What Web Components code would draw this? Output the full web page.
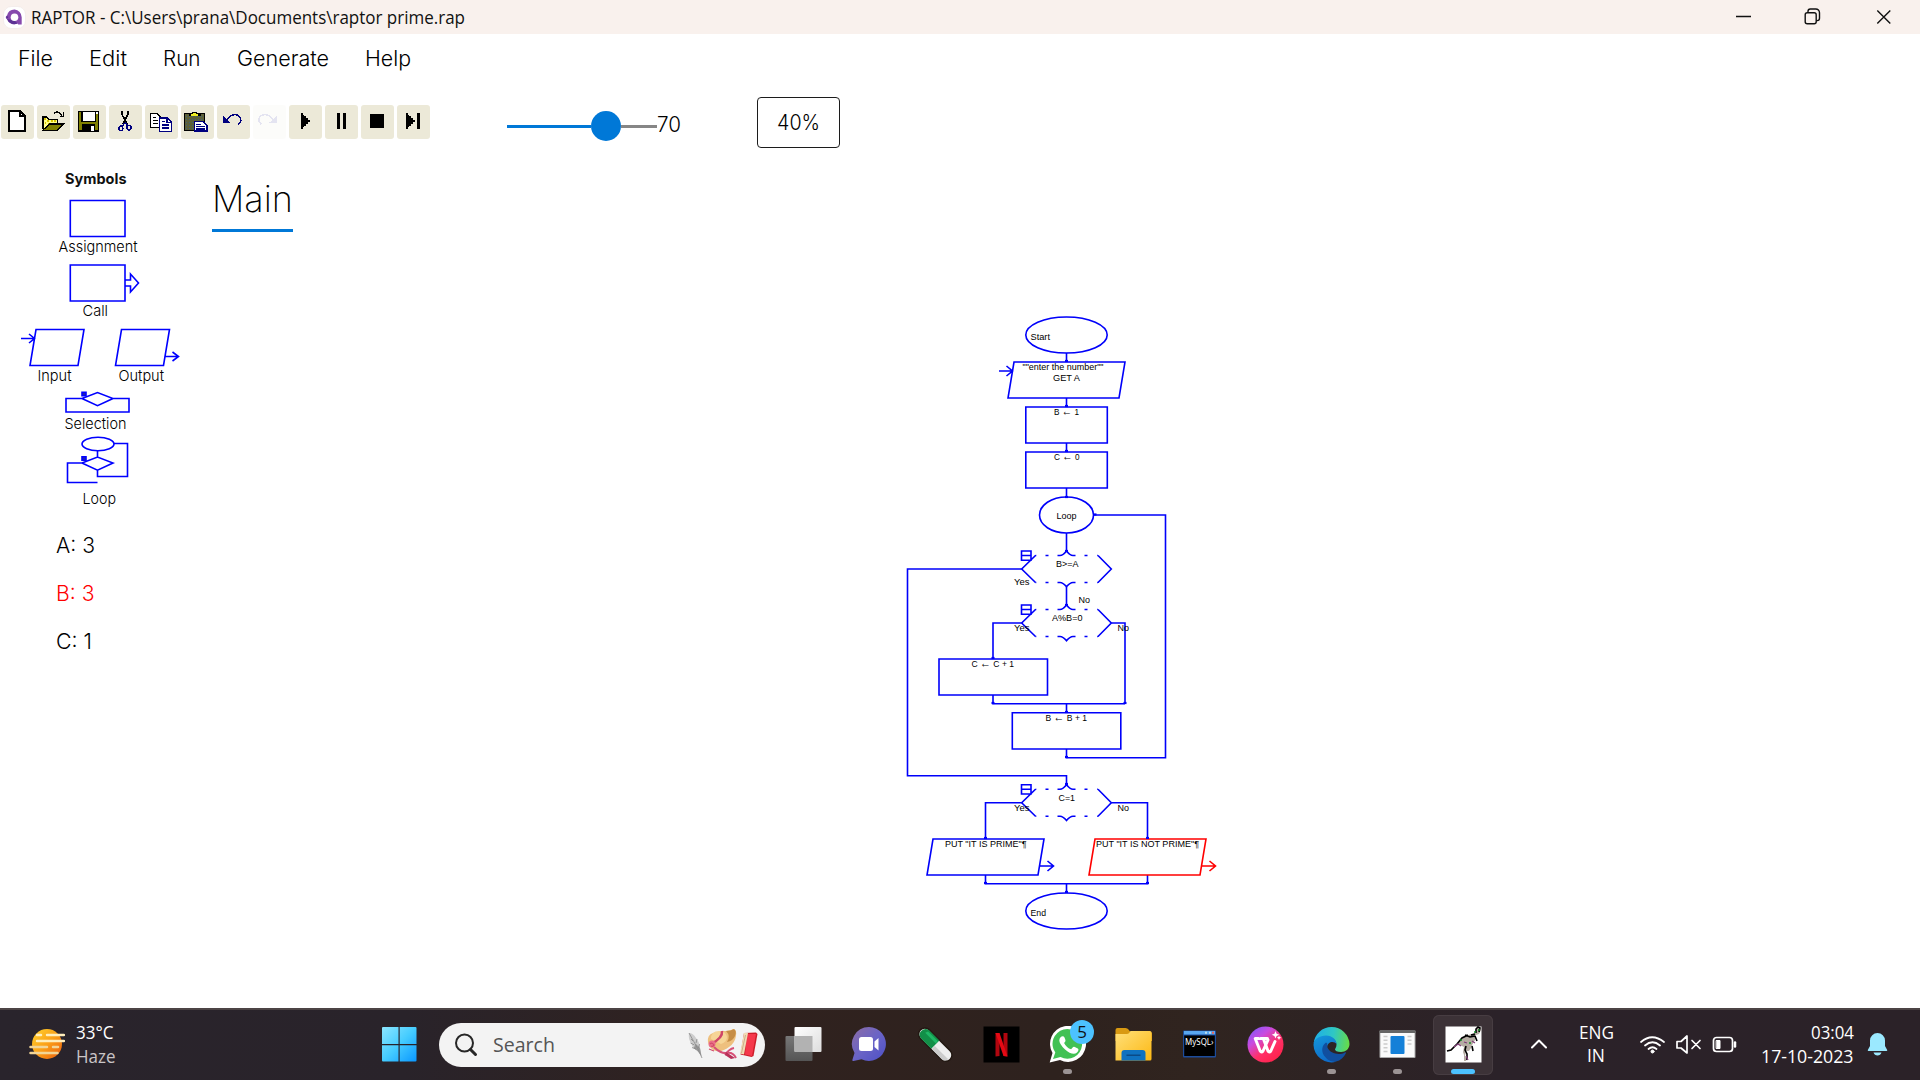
<!DOCTYPE html>
<html lang="en">
<head>
<meta charset="utf-8">
<title>RAPTOR</title>
<style>
html,body{margin:0;height:100%;background:#fff;overflow:hidden}
</style>
</head>
<body>
<raptor-desktop></raptor-desktop>
<script>
const define=(name,html,setup)=>customElements.define(name,class extends HTMLElement{
  connectedCallback(){
    if(this.shadowRoot)return;
    const r=this.attachShadow({mode:'open'});
    r.innerHTML=typeof html==='function'?html(this):html;
    if(setup)setup(this,r);
  }
});

/* One line of text set to an exact advance width. */
define('fit-text',el=>`<style>
:host{display:block;flex:none;width:${el.getAttribute('w')}px;font-size:${el.getAttribute('size')}px;white-space:nowrap}
span{display:inline-block;transform-origin:0 50%}
</style><span><slot></slot></span>`,(el,r)=>{
  const s=r.querySelector('span');
  const m=s.offsetWidth?s.getBoundingClientRect().width:0;
  if(m)s.style.transform=`scaleX(${(+el.getAttribute('w')/m).toFixed(4)})`;
});

/* ---------- title bar ---------- */
define('title-bar',`<style>
:host{display:flex;align-items:center;height:34px;box-sizing:border-box;background:#f9f1ed;color:#111;font-family:"Open Sans","Noto Sans",sans-serif;padding-left:3px}
fit-text{margin-left:5px}
.g{flex:1}
svg{display:block;flex:none}
.controls{display:flex;align-items:center;width:220px;height:34px}
</style>
<svg width="23" height="23" viewBox="0 0 23 23"><rect x=".5" y=".5" width="22" height="22" rx="8" fill="#fff" stroke="#eee6e4" stroke-width=".6"/><path d="M11.5 3.5a7.7 7.7 0 0 1 7.2 7.7V18.500h-3.500l-.7-.9A7.700 7.700 0 0 1 4 13.200 2 2 0 0 1 4 9.500 7.700 7.700 0 0 1 11.500 3.500Z" fill="#8649ad"/><path d="M4 13a7.700 7.700 0 0 0 10.500 4.500L11.500 14.500Z" fill="#5c3294"/><circle cx="11.500" cy="11.200" r="3.800" fill="#fff"/><circle cx="4.200" cy="11.300" r="1" fill="#5c3294"/></svg>
<fit-text w="434" size="17.500">RAPTOR - C:\\Users\\prana\\Documents\\raptor prime.rap</fit-text>
<div class="g"></div>
<div class="controls"><svg width="220" height="34" viewBox="1700 0 220 34" fill="none" stroke="#111" stroke-width="1.400"><path d="M1736 16.500h15M1877.300 10.500l13 13M1890.300 10.500l-13 13"/><rect x="1805.200" y="12.700" width="11" height="11" rx="2"/><path d="M1808 12.500v-1.200a2.300 2.300 0 0 1 2.300-2.300h5.500a3.700 3.700 0 0 1 3.700 3.700v5.600a2.300 2.300 0 0 1-2.300 2.300h-1"/></svg></div>`);

/* ---------- menu ---------- */
define('menu-bar',`<style>
:host{display:flex;align-items:center;height:48px;padding-left:18px;font-family:Inter,sans-serif;font-weight:300;color:#000}
fit-text+fit-text{margin-left:36px}
</style>
<fit-text w="35" size="21.500">File</fit-text>
<fit-text w="38" size="21.500">Edit</fit-text>
<fit-text w="37.500" size="21.500">Run</fit-text>
<fit-text w="92" size="21.500">Generate</fit-text>
<fit-text w="46" size="21.500">Help</fit-text>`);

/* ---------- toolbar ---------- */
const ICON={
new:`<path d="M24 18h34l14 14v45H24Z" fill="#fff" stroke="#000" stroke-width="6"/><path d="M57 18v15h15" fill="none" stroke="#000" stroke-width="4"/>`,
open:`<path d="M17 38h13l5 6h26v15H39L17 73Z" fill="#ff8"/><path d="M18 73V36h12l5 7h26v13" fill="none" stroke="#000" stroke-width="4"/><path d="M21 42h5M31 48h5M42 48h5M52 48h5M23 54h5M33 55h5" stroke="#d8c400" stroke-width="4"/><path d="M17 76l20-19h42L62 76Z" fill="#808000" stroke="#000" stroke-width="4"/><path d="M51 26c3-7 18-7 23 6M80 22v12H68" fill="none" stroke="#000" stroke-width="4"/>`,
save:`<rect x="17" y="20" width="59" height="59" fill="#808000" stroke="#000" stroke-width="5"/><rect x="27" y="19" width="40" height="31" fill="#fff" stroke="#000" stroke-width="4"/><rect x="27" y="58" width="40" height="22" fill="#000"/><rect x="54" y="64" width="9" height="13" fill="#fff"/><rect x="68" y="22" width="6" height="5" fill="#fff"/>`,
cut:`<path d="M38 18v9l6 11 5 10M57 18v9l-6 11-5 11-4 9M48 46l7 11" stroke="#000" stroke-width="5" fill="none"/><path d="M45 54l-3 10M49 52l6 9" stroke="#00007f" stroke-width="5"/><ellipse cx="35.500" cy="70" rx="6" ry="7" fill="none" stroke="#00007f" stroke-width="4.500"/><ellipse cx="60" cy="68" rx="6" ry="7" fill="none" stroke="#00007f" stroke-width="4.500"/>`,
copy:`<path d="M17 26h20l9 9v32H17Z" fill="#fff" stroke="#000" stroke-width="4"/><path d="M23 37h10M23 46h16M23 55h16" stroke="#000" stroke-width="3.500"/><path d="M44 39h23l12 12v28H44Z" fill="#fff" stroke="#00007f" stroke-width="4"/><path d="M66 39v13h12M50 50h9M50 60h22M50 69h22" stroke="#00007f" stroke-width="3.500" fill="none"/>`,
paste:`<rect x="11" y="25" width="59" height="52" rx="3" fill="#5c6038" stroke="#000" stroke-width="4"/><path d="M15 34h52M15 43h52M15 52h34M15 61h25M15 70h25" stroke="#3f5f7f" stroke-width="3" stroke-dasharray="4 5"/><path d="M24 34v-9h10v-5h14v5h11v9Z" fill="#000"/><path d="M30 32h22v-4h-6v-5H36v5h-6Z" fill="#ee2"/><path d="M41 50h26l11 11v17H41Z" fill="#fff" stroke="#00007f" stroke-width="4"/><path d="M46 58h14M46 65h25M46 72h25" stroke="#00007f" stroke-width="3.500"/>`,
undo:`<path d="M30 44l4-6c8-11 27-12 34-3 6 8 4 16-4 23" fill="none" stroke="#00007f" stroke-width="4.500"/><path d="M18 32v21h22Z" fill="#00007f"/>`,
redo:`<path d="M59 44l-4-6c-8-11-27-12-34-3-6 8-4 16 4 23" fill="none" stroke="#00007f" stroke-width="4.500"/><path d="M71 32v21H49Z" fill="#00007f"/>`,
play:`<path d="M36 24h5v5h5v5h5v5h6v5h6v8h-6v5h-6v5h-5v5h-5v5h-5Z" fill="#000"/>`,
pause:`<path d="M36 24h9v48h-9ZM54 24h9v48h-9Z" fill="#000"/>`,
stop:`<path d="M27 27h42v42H27Z" fill="#000"/>`,
step:`<path d="M27 24h5v5h5v5h5v5h6v5h6v8h-6v5h-6v5h-5v5h-5v5h-5ZM60 24h9v48h-9Z" fill="#000"/>`};
define('tool-button',el=>`<style>
:host{display:block;width:33px;height:34px;border-radius:3px;background:#ece9d8;flex:none}
:host([disabled]){opacity:.1}
svg{display:block;shape-rendering:crispEdges}
</style><svg width="33" height="34" viewBox="0 0 99 102">${ICON[el.getAttribute('icon')]}</svg>`);

define('speed-slider',`<style>
:host{display:flex;align-items:center;width:150px;height:30px}
.a{width:84px;height:3px;background:#0078d7}
.t{width:30px;height:30px;border-radius:50%;background:#0078d7;flex:none}
.b{flex:1;height:3px;background:#868686}
</style><div class="a"></div><div class="t"></div><div class="b"></div>`);

define('zoom-button',`<style>
:host{display:flex;align-items:center;justify-content:center;width:83px;height:51px;box-sizing:border-box;border:1.500px solid #1c1c1c;border-radius:4px;color:#000}
</style><slot></slot>`);

define('tool-bar',`<style>
:host{display:flex;align-items:center;height:80px;padding-left:1px;font-family:Inter,sans-serif;font-weight:300;color:#000}
.tools{display:flex;gap:3px}
speed-slider{margin:8px 0 0 77px}
zoom-button{margin-left:76px}
.v{margin-top:3px}
</style>
<div class="tools">${Object.keys(ICON).map(k=>`<tool-button icon="${k}"${k==='redo'?' disabled':''}></tool-button>`).join('')}</div>
<speed-slider></speed-slider><fit-text class="v" w="24" size="21.500">70</fit-text>
<zoom-button><fit-text w="43" size="21.500">40%</fit-text></zoom-button>`);

/* ---------- symbol palette ---------- */
define('symbol-tile',el=>{
  const y=+el.getAttribute('y'),h=+el.getAttribute('h');
  return `<style>:host{display:block;height:${h}px}svg{display:block;font:15px Inter,sans-serif;font-weight:300}</style>
<svg width="200" height="${h}" viewBox="0 ${y} 200 ${h}"><g fill="none" stroke="#00f" stroke-width="1.600">${SYMBOL[el.getAttribute('kind')]}</g>
${el.getAttribute('labels').split(';').map(l=>{const[t,x,w,b]=l.split(',');return `<text x="${x}" y="${b}" textLength="${w}" lengthAdjust="spacingAndGlyphs" fill="#000">${t}</text>`}).join('')}</svg>`});
const SYMBOL={
assignment:`<path d="M70.300 200.500h54.700v36h-54.700Z"/>`,
call:`<path d="M70.300 265h54.700v36h-54.700ZM125 280h5.500v-6l8 9-8 9v-6H125"/>`,
io:`<path d="M36 329.500h48l-6 36H30ZM121.500 329.500h48l-6 36h-48ZM21 338.500h13.500M29 334l5.500 4.500-5.500 4.500M165 356.500h13.500M172.500 352l6 4.500-6 4.500"/>`,
selection:`<path d="M82 398.500l15.500-6 15.500 6-15.500 7.200ZM82 398.500H66V412h63v-13.500h-16"/><path d="M82 392.200h4v3.600h-4Z" fill="#22a"/>`,
loop:`<ellipse cx="98" cy="444" rx="16" ry="6.700"/><path d="M114 443.500h13.500v33h-30v-6.300M97.500 450.700v6.300M82 463l15.500-6 15.500 6-15.500 7.200ZM82 463H67.500v19.500h30"/><path d="M82 456.700h4v3.600h-4Z" fill="#22a"/>`};
define('symbol-palette',`<style>
:host{display:flex;flex-direction:column;width:200px;font-family:Inter,sans-serif}
.h{height:30px;box-sizing:border-box;display:flex;align-items:center;padding:0 0 2px 65px;font-weight:700;color:#111}
.vars{display:flex;flex-direction:column;font-weight:300;padding:5px 0 0 56px}
.vars div{height:48px;display:flex;align-items:center}
</style>
<div class="h"><fit-text w="61.500" size="14.500">Symbols</fit-text></div>
<symbol-tile kind="assignment" y="194" h="66" labels="Assignment,58.500,79,252"></symbol-tile>
<symbol-tile kind="call" y="260" h="64" labels="Call,82.500,25.500,316"></symbol-tile>
<symbol-tile kind="io" y="324" h="64" labels="Input,37.500,34,381;Output,118.500,45.500,381"></symbol-tile>
<symbol-tile kind="selection" y="388" h="46" labels="Selection,64.500,62,429"></symbol-tile>
<symbol-tile kind="loop" y="434" h="82" labels="Loop,82.500,33.500,504"></symbol-tile>
<div class="vars"><div style="color:#000"><fit-text w="39" size="21.500">A: 3</fit-text></div><div style="color:#f00"><fit-text w="38.500" size="21.500">B: 3</fit-text></div><div style="color:#000"><fit-text w="36" size="21.500">C: 1</fit-text></div></div>`);

/* ---------- tab + flowchart ---------- */
define('chart-tab',`<style>
:host{display:block;width:81px;border-bottom:3px solid #0078d7;height:55px;margin-left:12px;font-family:Inter,sans-serif;font-weight:200;color:#000;line-height:50px}
</style><fit-text w="81" size="36"><slot></slot></fit-text>`);

const txt=(t,x,y,w)=>`<text x="${x}" y="${y}" textLength="${w}" lengthAdjust="spacingAndGlyphs">${t.replace('←','<tspan font-size="12">←</tspan>')}</text>`;
const decision=y=>`<path d="M1035.500 ${y-13.500}L1021.700 ${y}L1035.500 ${y+13.500}M1098 ${y-13.500}L1111.300 ${y}L1098 ${y+13.500}
M1045.500 ${y-13.500}h3M1084.500 ${y-13.500}h3M1057.500 ${y-13.500}h2.500q3 0 6.500-4.500q3.500 4.500 6.500 4.500h2.500
M1045.500 ${y+13.500}h3M1084.500 ${y+13.500}h3M1057.500 ${y+13.500}h2.500q3 0 6.500 4.300q3.500-4.300 6.500-4.300h2.500
M1021.500 ${y-18}h9.500v9.300h-9.500ZM1021.500 ${y-13.500}h9.500M1035.500 ${y-13.500}h.8M1035.500 ${y+13.500}h.8M1097.200 ${y-13.500}h.8M1097.200 ${y+13.500}h.8"/>`;
const dot=(x,y)=>`<path d="M${x-1.500} ${y-1}h3" stroke-width="2.200"/>`;
define('flow-chart',`<style>
:host{display:block;width:1720px;height:776px}
svg{display:block;font:9.400px "Liberation Sans",Arial,sans-serif}
text{fill:#000}
</style>
<svg width="1720" height="776" viewBox="200 232 1720 776">
<g fill="none" stroke="#0000fa" stroke-width="1.600">
<ellipse cx="1066.500" cy="335" rx="40.700" ry="18"/>
<path d="M1066.500 353v9M1014 362h111l-6 36h-111ZM999 371h13.500M1006.500 366l6 5-6 5M1066.500 398v9M1025.800 407h81.500v36h-81.500ZM1066.500 443v9M1025.800 452h81.500v36h-81.500ZM1066.500 488v9"/>
<ellipse cx="1066.500" cy="515" rx="27" ry="18"/>
<path d="M1093.500 515H1165.500V757.800H1066.500V749M1066.500 533v18M1021.700 569H907.500V775.700H1066.500V784.500M1066.500 587v18M1021.700 623H993V659M1111.300 623H1125V703.700M939 659h108.500v36H939ZM993 695v8.700H1125M1066.500 703.700v9M1012.300 712.700h108.500v36.300h-108.500Z"/>
${decision(569)}${decision(623)}${decision(802.700)}
<path d="M1021.700 802.700H985.500V839M1111.300 802.700H1147.500V839M933 839h111l-6 36H927ZM1040 866h13M1047.500 861l6 5-6 5M985.500 875v8.800H1147.500V875M1066.500 883.800v9"/>
<ellipse cx="1066.500" cy="911" rx="40.700" ry="18"/>
${dot(1066.500,362)}${dot(1066.500,407)}${dot(1066.500,452)}${dot(1066.500,498)}${dot(1095,515.500)}${dot(1066.500,552)}${dot(1066.500,606)}${dot(993,659)}${dot(993,704)}${dot(1125,704)}${dot(1066.500,713)}${dot(1066.500,758)}${dot(1066.500,785)}${dot(985.500,839)}${dot(985.500,884)}${dot(1147.500,884)}${dot(1066.500,893)}
</g>
<path d="M1095 839h111l-6 36h-111ZM1202 866h13M1209.500 861l6 5-6 5" fill="none" stroke="#f00" stroke-width="1.600"/>
${dot(1147.500,839).replace('<path','<path stroke="#00f"')}
${txt('Start',1030.500,340,19.500)}
${txt('""enter the number""',1022.500,370,81)}
${txt('GET A',1053,381,27)}
${txt('B ← 1',1054,415,25)}
${txt('C ← 0',1054,460,25.500)}
${txt('Loop',1056.500,519,20)}
${txt('B&gt;=A',1056,566.500,22.500)}
${txt('Yes',1014,584.500,15.500)}
${txt('No',1078.500,602.500,11.500)}
${txt('A%B=0',1052,620.500,30.500)}
${txt('Yes',1014,630.500,15.500)}
${txt('No',1117.500,630.500,11.500)}
${txt('C ← C + 1',971.500,667,42.500)}
${txt('B ← B + 1',1045.500,721,41.500)}
${txt('C=1',1058.500,800.500,16.500)}
${txt('Yes',1014,811,15.500)}
${txt('No',1117.500,811,11.500)}
${txt('PUT "IT IS PRIME"¶',945,847,81.500)}
${txt('PUT "IT IS NOT PRIME"¶',1096,847,103)}
${txt('End',1030.500,916,15.500)}
</svg>`);

define('work-area',`<style>
:host{display:flex;height:846px}
symbol-palette{margin-top:2px}
main{display:flex;flex-direction:column;width:1720px}
chart-tab{margin-top:12px;box-sizing:content-box}
</style><symbol-palette></symbol-palette><main><chart-tab>Main</chart-tab><flow-chart></flow-chart></main>`);

/* ---------- taskbar ---------- */
const APP={
start:`<defs><linearGradient id="a" x1="0" y1="0" x2="1" y2="1"><stop offset="0" stop-color="#8ce6ff"/><stop offset=".5" stop-color="#45ccff"/><stop offset="1" stop-color="#0a97ff"/></linearGradient></defs><path d="M2 1h15.500v17H1V2Q1 1 2 1M18.700 1H34.500q1 0 1 1v16H18.700ZM1 19.200h16.500V35.500H2q-1 0-1-1ZM18.700 19.200H35.500V34.500q0 1-1 1H18.700Z" fill="url(#a)"/>`,
views:`<defs><linearGradient id="a" x1="0" y1="0" x2="1" y2="1"><stop stop-color="#fff"/><stop offset="1" stop-color="#ddd"/></linearGradient><linearGradient id="b" x1="0" y1="0" x2="0" y2="1"><stop stop-color="#777"/><stop offset="1" stop-color="#555"/></linearGradient></defs><rect x=".5" y="10" width="27" height="25" rx="1" fill="url(#b)"/><rect x="9.500" y="1" width="27" height="25" rx="1" fill="url(#a)"/><path d="M9.500 10h18v16h-17q-1 0-1-1Z" fill="#b2b2b2"/>`,
chat:`<defs><linearGradient id="a" x1="0" y1="0" x2="1" y2="1"><stop stop-color="#8c6ca4"/><stop offset=".5" stop-color="#6a64c6"/><stop offset="1" stop-color="#4d50c6"/></linearGradient></defs><path d="M18 1a17 17 0 1 1-7.500 32.300L2.500 35q-1.500 0-1-1.500L3.500 27A17 17 0 0 1 18 1Z" fill="url(#a)"/><rect x="8" y="11" width="14" height="14" rx="2.500" fill="#fff"/><path d="M23.500 15.500l4-3.500v12.500l-4-3.500Z" fill="#fff"/>`,
pill:`<g transform="rotate(45 18.500 18.500)"><rect x="-2.500" y="12.500" width="42" height="12.500" rx="6.300" fill="#eee" stroke="#221812" stroke-width="1.500"/><path d="M18.500 13H4a5.800 5.800 0 0 0 0 11.500h14.500Z" fill="#128f48"/><path d="M4 14.500h14v3H3Z" fill="#1fb765"/><path d="M19 20h19q-1 4.500-5 4.500H19Z" fill="#ccc"/></g>`,
netflix:`<rect x=".5" y=".5" width="36" height="36" fill="#000"/><path d="M12.500 7h4v23l-4 .5ZM20.500 7h4v23.500l-4-.5Z" fill="#b1060f"/><path d="M12.500 7h4l8 23.500-4-.5Z" fill="#e50914"/>`,
whatsapp:`<path d="M.7 36.500L3.500 27A18 18 0 1 1 11 34Z" fill="#fff"/><path d="M4 33l2.300-6.500A14.800 14.800 0 1 1 11.500 31Z" fill="#41c154"/><path d="M12.500 10.500q2-1 3 1l1 2.700q.3 1-1.400 2.700 2.500 5 7 6.300l2-2.200q.8-.6 1.700-.1l3 1.500q1 .6.500 2-1 3-4.500 3.300-4 0-9-4.500-5.500-5.200-5.500-9 .1-2.400 2.200-3.700Z" fill="#fff"/>`,
files:`<path d="M.5 4q0-2 2-2h8q2 0 3 1.500l2 2.500h20q1.500 0 1.500 1.500V15H.5Z" fill="#d99a12"/><defs><linearGradient id="a" x1="0" y1="0" x2="1" y2="1"><stop stop-color="#ffe07a"/><stop offset="1" stop-color="#fdb813"/></linearGradient></defs><path d="M.5 8h11q2 0 3-1.500L15.500 5H35q1.500 0 1.500 1.500V33q0 1.500-1.500 1.500H.500Z" fill="url(#a)"/><path d="M6.500 34.500V27q0-3 3-3h18q3 0 3 3v7.500Z" fill="#0f72c0"/><path d="M11.500 28.500h14v1.500h-14Z" fill="#0b4a86"/>`,
mysql:`<rect x="2" y="4.500" width="33" height="27" rx="1" fill="#1c4c9c"/><rect x="3" y="5" width="31" height="3.500" fill="#58a6f0"/><path d="M24 5.700h2v2h-2ZM28 5.700h2v2h-2Z" fill="#bde"/><path d="M31 5.700h2v2h-2Z" fill="#e65"/><rect x="3.200" y="9.500" width="30.600" height="20.500" fill="#000"/><text x="4" y="19" font-family="Noto Sans" font-size="8" fill="#fff" textLength="28.500" lengthAdjust="spacingAndGlyphs">MySQL›</text>`,
wps:`<defs><linearGradient id="a" x1="0" y1="0" x2=".8" y2="1"><stop stop-color="#6d5cff"/><stop offset=".35" stop-color="#c94be0"/><stop offset=".65" stop-color="#ff3068"/><stop offset="1" stop-color="#ff2148"/></linearGradient></defs><circle cx="18.500" cy="18.500" r="18" fill="url(#a)"/><path d="M11.500 12.500H8.200l5 12.500q1.200 2 2.800 0L21 14M16.500 13l4.500 12q1.200 2 2.800 0L28 15.500M20.500 12.500h-7" fill="none" stroke="#fff" stroke-width="3" stroke-linejoin="round" stroke-linecap="round"/><path d="M28.500 5l1.100 2.700 2.700 1.100-2.700 1.100-1.100 2.700-1.100-2.700-2.700-1.100 2.700-1.100ZM32 9.500l.7 1.500 1.500.7-1.500.7-.7 1.500-.7-1.500-1.500-.7 1.500-.7Z" fill="#fff"/>`,
edge:`<defs><linearGradient id="a" x1="0" y1=".3" x2="1" y2=".4"><stop stop-color="#1eaee8"/><stop offset=".55" stop-color="#2fc7c4"/><stop offset="1" stop-color="#65dc4b"/></linearGradient><linearGradient id="b" x1="0" y1="0" x2=".4" y2="1"><stop stop-color="#1498dc"/><stop offset="1" stop-color="#0f6cc8"/></linearGradient></defs><path d="M.6 17.500A18 18 0 0 1 36.500 18c0 5-4 8-8.500 8-4 0-6-1.400-6-2.500s1.500-2 1.500-5c0-4-4-7.500-9.500-7.500C7 11 1.500 14 .6 17.500Z" fill="url(#a)"/><path d="M.5 19C.5 13 7 9.500 13 9.500c6.500 0 10.500 4.500 10.500 8.500-2-3.500-9.500-3-9.500 4 0 6.500 5 13.500 9 13.800A18 18 0 0 1 .5 19Z" fill="url(#b)"/><path d="M13 16.500c-4 3-5 8-2 13 3 4.500 8 7 12 6 4.500-1 8-4 10-8.500 0-.8-.5-1-1.200-.600C27 29.500 17 28 14.500 21.500c-.4-1.500-.5-3-.2-4Z" fill="#114f9f"/>`,
window:`<rect x=".5" y="4.500" width="36" height="27.500" rx="1" fill="#aaa"/><rect x="1.500" y="7" width="34" height="24" fill="#fafafa"/><path d="M.500 4.500h36v2.500h-36Z" fill="#666"/><rect x="11.500" y="10" width="14" height="18" rx="1" fill="#1480d8"/><path d="M4.500 10.500h4M4.500 14.300h4M4.500 18h4M4.500 21.700h4M4.500 25.500h4M28.500 10.500h4M28.500 14.300h4M28.500 18h4" stroke="#ccc" stroke-width="1.600"/>`,
raptor:`<rect x=".5" y=".5" width="36" height="36" fill="#fff"/><path d="M2 25l4-1 5-5 6-6 3-3 7-2 3-1 1-4 4-2 1 3-2 4-3 1-1 5-3 5-1 3-2 3-3 0-1 5 2 3-1 2h-2l0-6-1-3 1-5-4-2-4 0-4 5-3 1Z" fill="#b5ada3"/><path d="M2 25l4-1 6-6 5-6 6-3M26 9l4-1M31 7v-4l2-2 2 1-1 4M20 9l5 2 5-1M30 10l2 5M21 20l-1 4 2 4 0 6M27 20l1 5" fill="none" stroke="#000" stroke-width="1.600"/><path d="M9 21l4-3 3 2M19 16l3 1M27 15l3 2M21 30l2 4" stroke="#824178" stroke-width="1.300" fill="none"/><path d="M15 14h2M29 6h2M24 17h2M33 4h2" stroke="#168b28" stroke-width="1.500"/>`};
define('task-app',el=>`<style>
:host{display:flex;flex-direction:column;align-items:center;width:60px;height:60px;box-sizing:border-box;border-radius:6px;flex:none;padding-top:11.500px;margin:0 3px;position:relative}
:host([active]){background:#3c3237;box-shadow:inset 0 0 0 1px #473d42}
svg{display:block;flex:none}
i{display:block;width:9px;height:5px;border-radius:3px;background:#9b9394;margin-top:5.500px}
:host([active]) i{width:24px;background:#4cc2ff}
b{position:absolute;left:33px;top:5px;width:24px;height:24px;border-radius:50%;background:#4cc2ff;color:#111;font:400 17px/24px "Open Sans",sans-serif;text-align:center}
</style><svg width="37" height="37" viewBox="0 0 37 37">${APP[el.getAttribute('app')]}</svg>${el.hasAttribute('running')?'<i></i>':''}${el.hasAttribute('badge')?`<b>${el.getAttribute('badge')}</b>`:''}`);

define('search-box',`<style>
:host{display:flex;align-items:center;width:326px;height:44px;border-radius:22px;background:#f3f3f3;flex:none;box-sizing:border-box;padding:0 7px 0 15px;color:#555}
svg{display:block;flex:none}.g{flex:1}fit-text{margin-left:15px}
</style>
<svg width="24" height="24" viewBox="0 0 24 24" fill="none" stroke="#272727"><circle cx="10.500" cy="10" r="8.500" stroke-width="2"/><path d="M16.500 16.500l5 5" stroke-width="3" stroke-linecap="round"/></svg>
<fit-text w="62" size="20">Search</fit-text><div class="g"></div>
<svg width="72" height="36" viewBox="0 0 72 36">
<path d="M3 6q4 0 7 5 4 5 4 10l1.500 8-4-5q-5-3-6-7Q2 12 3 6Z" fill="#cdcdcd"/><path d="M10 17l4 4 1.500 8-4-5-4-3Z" fill="#999"/><path d="M3 6q5 9 9 16l4 9M7 14l-2-2M8.500 18l-4-2M10 22l-4-1.500M10 16l1-4M12.500 21l1-4" fill="none" stroke="#888" stroke-width=".8"/>
<path d="M22 15q-1-7 5-9l9-2q8 0 11-2 4 0 3 7-1 7-7 11-6 5-13 4-6-1-8-9Z" fill="#eec07e"/><path d="M40 4q5 0 8-2 3 2 1 7-2 5-8 6 4-6-1-11Z" fill="#c68d45"/><path d="M25 12q0-8 8-8 7 0 8 6 0 5-6 7Z" fill="#f6d597"/><path d="M36 4q1 7-11 13" stroke="#cf4568" stroke-width="2.500" fill="none"/><path d="M28 20q7 7 13 6t9 5M48 21q-5 1-9 7" stroke="#d65077" stroke-width="2" fill="none"/><path d="M40 25l9 6-4 1-6-4Z" fill="#b83159"/><circle cx="26" cy="17" r="3.500" fill="#ec7088"/><path d="M24 17q2-2 4 1-1 2-3 1M23 22l5 2" fill="none" stroke="#d14c6a" stroke-width="1.200"/>
<path d="M58 6l12-.5 1.500 1.500-4 22-2 1-11-2.500Z" fill="#cd1d29"/><path d="M61 7h9l-4 22-7-1.500Z" fill="#f5384b"/><path d="M58 6h4l-4 21.500-4-1Z" fill="#f0dcb4"/><path d="M59.500 8l-4 18" stroke="#b48c6d" stroke-width=".6"/></svg>`);

define('task-bar',`<style>
:host{display:flex;align-items:center;height:72px;box-sizing:border-box;padding-bottom:2px;border-top:2px solid #4c4445;color:#fff;font-family:"Open Sans","Noto Sans",sans-serif;background:linear-gradient(90deg,#29242c 0,#29232a 21%,#30221f 37%,#2e221e 55%,#30241f 62%,#2b2229 78%,#2b2228 100%)}
svg{display:block;flex:none}
.weather{display:flex;align-items:center;width:366px;box-sizing:border-box;padding-left:28px}
.col{display:flex;flex-direction:column;line-height:24px}
.weather .col{margin-left:11px}
.hz{color:#c9c5c7}
.apps{display:flex;align-items:center;margin-top:1px}
search-box{margin:0 5px 0 7px}
.tray{display:flex;align-items:center;margin-left:35px}
.r{align-items:flex-end}.c{align-items:center}
</style>
<div class="weather"><svg width="37" height="32" viewBox="0 0 37 32"><defs><linearGradient id="s" x1="0" y1="0" x2="1" y2="1"><stop stop-color="#ffd42d"/><stop offset=".5" stop-color="#fba018"/><stop offset="1" stop-color="#ea5b0c"/></linearGradient></defs><circle cx="19" cy="16" r="15" fill="url(#s)"/><g stroke-width="2.500" stroke-linecap="round"><path d="M9 7h4M19 7h17M9 13h27" stroke="#ffeebb"/><path d="M2.500 19h16.500M25 19h5M2.500 25h27" stroke="#f2d596"/></g></svg>
<div class="col"><fit-text w="37.500" size="18">33°C</fit-text><fit-text class="hz" w="39.500" size="18">Haze</fit-text></div></div>
<div class="apps"><task-app app="start"></task-app><search-box></search-box>
<task-app app="views"></task-app><task-app app="chat"></task-app><task-app app="pill"></task-app><task-app app="netflix"></task-app><task-app app="whatsapp" running badge="5"></task-app><task-app app="files"></task-app><task-app app="mysql"></task-app><task-app app="wps"></task-app><task-app app="edge" running></task-app><task-app app="window" running></task-app><task-app app="raptor" running active></task-app></div>
<div class="tray">
<svg width="16" height="10" viewBox="0 0 16 10" fill="none" stroke="#fff" stroke-width="2" stroke-linecap="round" stroke-linejoin="round"><path d="M1 8.500l7-7 7 7"/></svg>
<div class="col c" style="margin-left:31.500px;line-height:23px"><fit-text w="35" size="18">ENG</fit-text><fit-text w="18" size="18">IN</fit-text></div>
<svg style="margin-left:26px" width="98" height="26" viewBox="0 0 98 26" fill="none" stroke="#fff" stroke-width="1.700" stroke-linecap="round" stroke-linejoin="round"><path d="M1 11q11-9.500 23 0M5 14.500q7.500-6.500 15 0M8.500 18q4-3.500 8 0"/><circle cx="12.500" cy="20.500" r="1.500" fill="#fff" stroke-width="1"/><path d="M37 10.500h4l6-5.500v17l-6-5h-4ZM52 9.500l8 8M60 9.500l-8 8"/><rect x="73.500" y="6.500" width="19" height="14" rx="3"/><path d="M95 11.500v4" stroke-width="2.500"/><rect x="76.500" y="9.500" width="3.500" height="8" fill="#fff" stroke-width="1"/></svg>
<div class="col r" style="margin-left:24px;width:92px"><fit-text w="43" size="18">03:04</fit-text><fit-text w="92.500" size="18">17-10-2023</fit-text></div>
<svg style="margin-left:13px" width="21" height="24" viewBox="0 0 21 24" fill="#9be9ff"><path d="M10.500 1a7.500 7.500 0 0 1 7.500 7.500V14l2.200 4q.3 1-.7 1h-18q-1 0-.7-1L3 14V8.500A7.500 7.500 0 0 1 10.500 1ZM6.500 20.500h8q-1 3-4 3t-4-3Z"/></svg>
</div>`);

define('raptor-desktop',`<style>
:host{display:flex;flex-direction:column;width:1920px;height:1080px;background:#fff;overflow:hidden}
</style><title-bar></title-bar><menu-bar></menu-bar><tool-bar></tool-bar><work-area></work-area><task-bar></task-bar>`);
</script>
</body>
</html>
